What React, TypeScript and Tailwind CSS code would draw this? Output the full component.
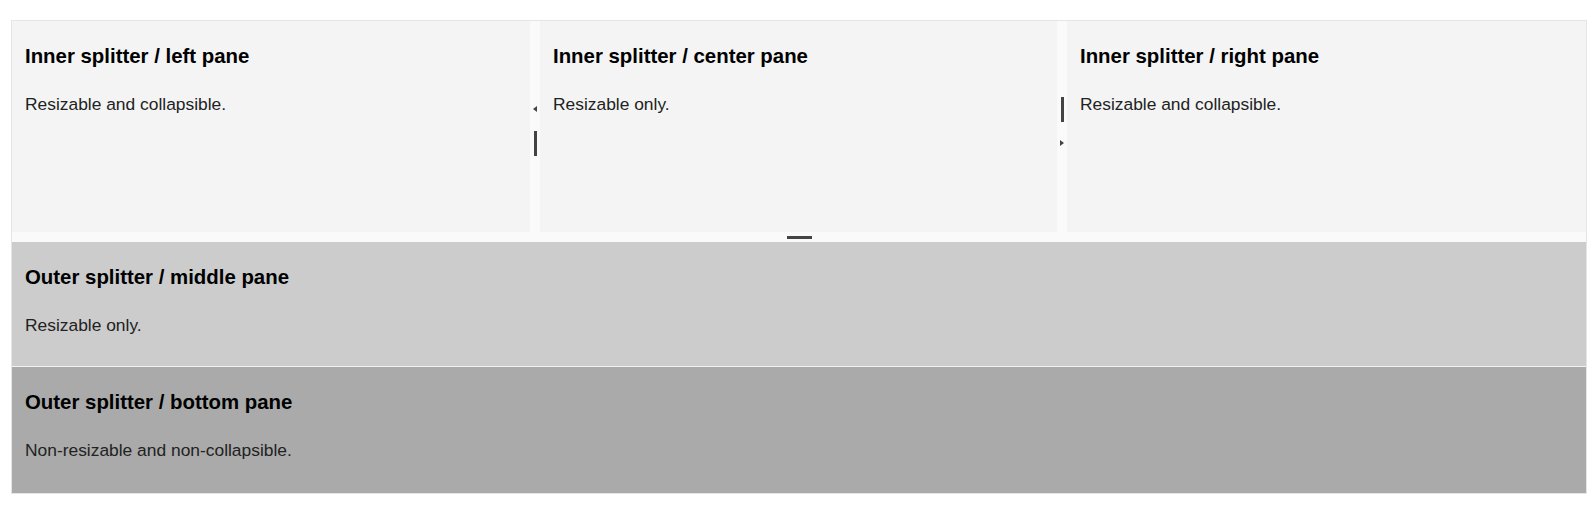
import React from "react";

type PaneProps = {
  title: string;
  note: string;
  className?: string;
};

const Pane = ({ title, note, className }: PaneProps) => (
  <div className={`px-[13px] pt-[24px] ${className ?? ""}`}>
    <h3 className="text-[20.4px] leading-[23px] font-bold text-black">{title}</h3>
    <p className="mt-[26px] text-[17.4px] leading-[20px] text-[#222]">{note}</p>
  </div>
);

const VHandle = () => <div className="w-[3px] h-[25px] bg-[#444]" />;

const App = () => {
  return (
    <div
      className="w-full h-[512px] bg-white pt-[20px] pl-[11px]"
      style={{ fontFamily: '"Liberation Sans", Arial, sans-serif' }}
    >
      <div className="w-[1576px] border border-[#e5e5e5] flex flex-col">
        {/* inner splitter */}
        <div className="h-[211px] flex">
          <Pane
            className="w-[518px] bg-[#f4f4f4]"
            title="Inner splitter / left pane"
            note="Resizable and collapsible."
          />
          <div className="w-[10px] bg-[#fafafa] flex flex-col items-center pt-[85px]">
            <div className="w-0 h-0 border-y-[3px] border-y-transparent border-r-[4px] border-r-[#444] -ml-[1px]" />
            <div className="mt-[19px]">
              <VHandle />
            </div>
          </div>
          <Pane
            className="w-[517px] bg-[#f4f4f4]"
            title="Inner splitter / center pane"
            note="Resizable only."
          />
          <div className="w-[10px] bg-[#fafafa] flex flex-col items-center pt-[76px]">
            <VHandle />
            <div className="mt-[18px] w-0 h-0 border-y-[3px] border-y-transparent border-l-[4px] border-l-[#444] -ml-[1px]" />
          </div>
          <Pane
            className="flex-1 bg-[#f4f4f4]"
            title="Inner splitter / right pane"
            note="Resizable and collapsible."
          />
        </div>

        {/* outer splitter bar */}
        <div className="h-[10px] bg-[#fafafa] flex items-center justify-center">
          <div className="w-[25px] h-[3px] bg-[#444]" />
        </div>

        <Pane
          className="h-[124px] bg-[#cccccc]"
          title="Outer splitter / middle pane"
          note="Resizable only."
        />
        <div className="h-[1px] bg-[#f2f2f2]" />
        <Pane
          className="h-[126px] bg-[#aaaaaa]"
          title="Outer splitter / bottom pane"
          note="Non-resizable and non-collapsible."
        />
      </div>
    </div>
  );
};

export default App;
